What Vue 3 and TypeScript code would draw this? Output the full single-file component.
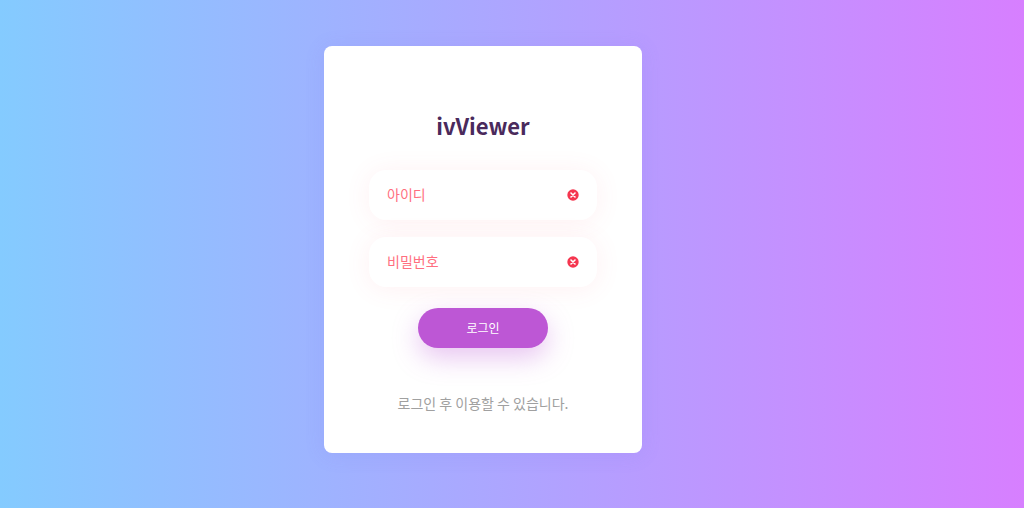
<script setup lang="ts">
const fields: string[] = ['아이디', '비밀번호']
</script>

<template>
  <main class="page">
    <section class="card">
      <h1 class="title">ivViewer</h1>
      <div class="fields">
        <div v-for="f in fields" :key="f" class="field">
          <span class="label">{{ f }}</span>
          <svg class="err" viewBox="0 0 12 12" width="12" height="12" aria-hidden="true">
            <circle cx="6" cy="6" r="5.7" fill="#f5364f" />
            <path d="M4 4l4 4M8 4l-4 4" stroke="#fff" stroke-width="1.6" stroke-linecap="round" fill="none" />
          </svg>
        </div>
      </div>
      <button class="login" type="button">로그인</button>
      <p class="hint">로그인 후 이용할 수 있습니다.</p>
    </section>
  </main>
</template>

<style scoped>
.page {
  box-sizing: border-box;
  width: 100%;
  height: 508px;
  padding: 46px 0 0 324px;
  background: linear-gradient(90deg, #84cbff 0%, #d77fff 100%);
  font-family: "Noto Sans CJK KR", "Noto Sans", sans-serif;
  overflow: hidden;
}
.card {
  box-sizing: border-box;
  width: 318px;
  height: 407px;
  padding: 61px 45px 0;
  background: #fff;
  border-radius: 8px;
  box-shadow: 0 2px 20px rgba(120, 110, 230, 0.14);
  display: flex;
  flex-direction: column;
  align-items: center;
}
.title {
  margin: 0;
  font-size: 22px;
  line-height: 36px;
  font-weight: 700;
  color: #4a2a5c;
}
.fields {
  margin-top: 27px;
  display: flex;
  flex-direction: column;
  gap: 17px;
  width: 100%;
}
.field {
  box-sizing: border-box;
  height: 50px;
  padding: 0 18px;
  border-radius: 17px;
  background: #fff;
  box-shadow: 0 2px 26px rgba(255, 90, 110, 0.09);
  display: flex;
  align-items: center;
  justify-content: space-between;
}
.label {
  font-size: 14px;
  line-height: 20px;
  margin-top: -2px;
  color: #ff6f80;
}
.err {
  flex: none;
}
.login {
  margin-top: 21px;
  width: 130px;
  height: 40px;
  border: 0;
  border-radius: 20px;
  padding: 0 0 2px;
  background: #bd57d5;
  color: #fff;
  font: 400 12px "Noto Sans CJK KR", sans-serif;
  box-shadow: 0 10px 26px rgba(189, 87, 213, 0.34);
}
.hint {
  margin: 45px 0 0;
  font-size: 14px;
  line-height: 20px;
  color: #a0a0a0;
}
</style>
